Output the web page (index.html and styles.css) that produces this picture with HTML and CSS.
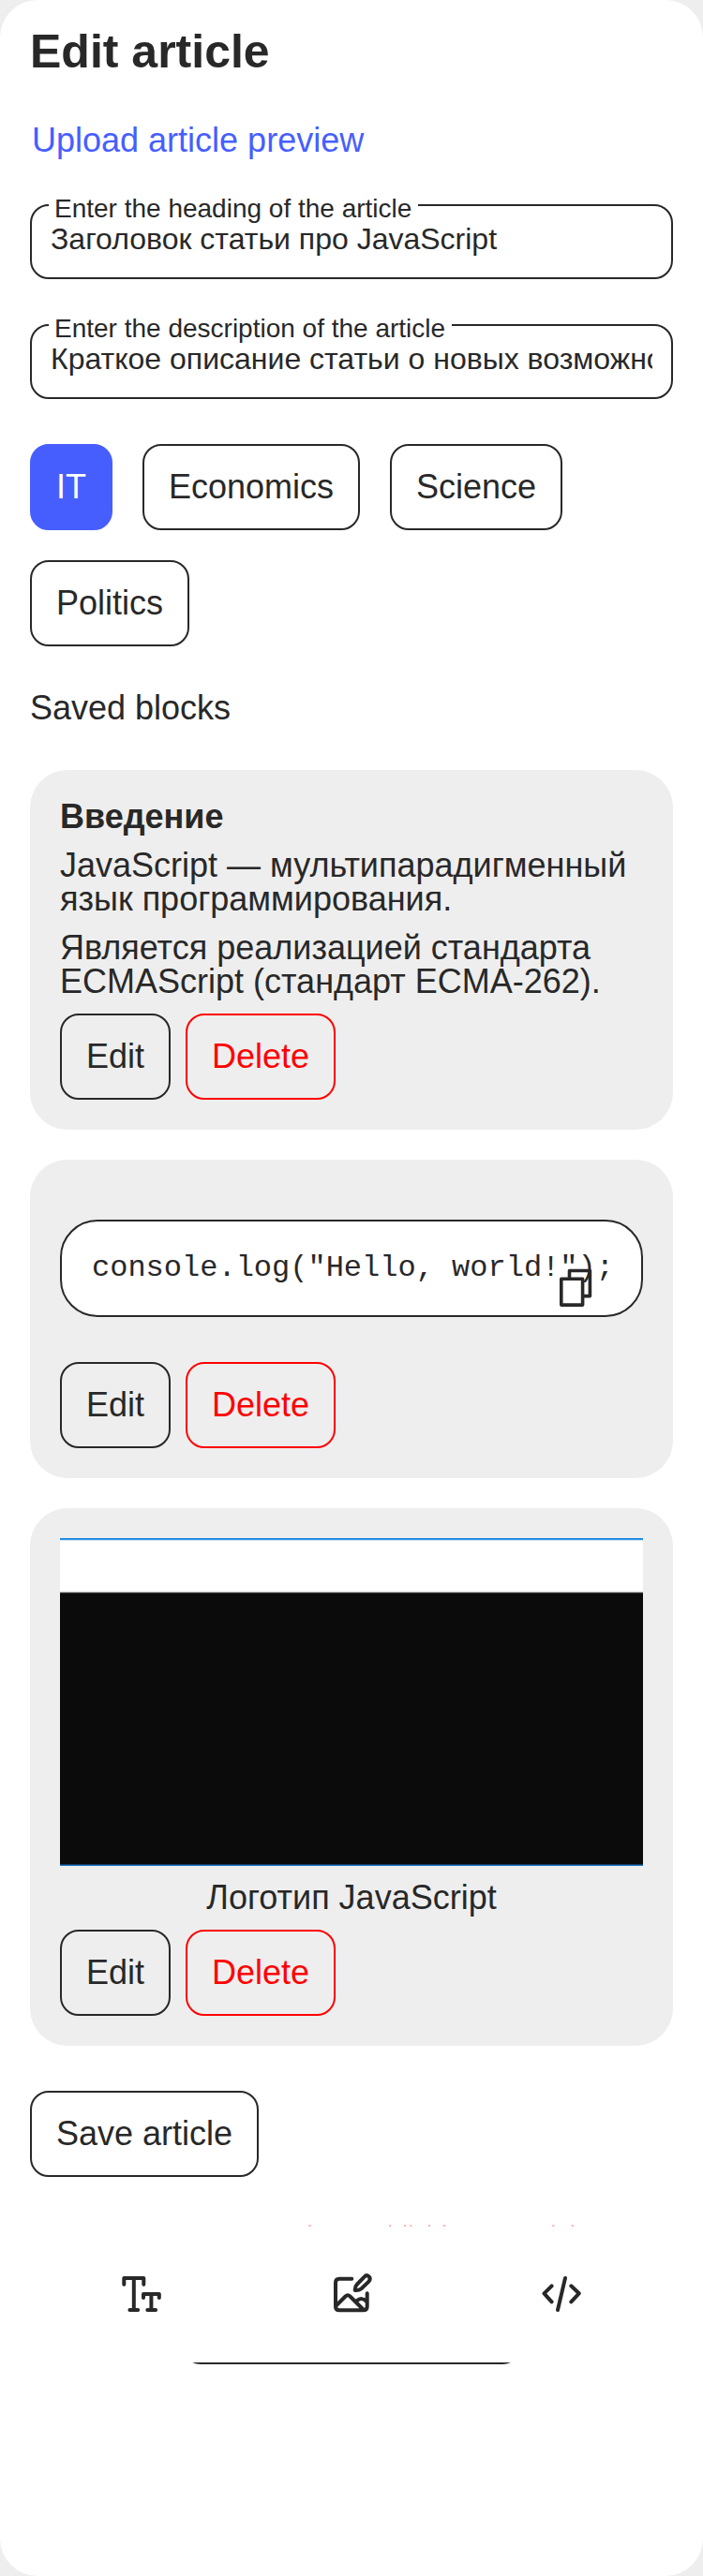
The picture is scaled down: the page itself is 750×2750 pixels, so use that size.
FILE: index.html
```html
<!DOCTYPE html>
<html lang="en">
<head>
<meta charset="utf-8">
<title>Edit article</title>
<link rel="stylesheet" href="styles.css">
</head>
<body>
<main class="page">
  <h1 class="title">Edit article</h1>
  <a class="upload">Upload article preview</a>
  <div class="field">
    <span class="field-label">Enter the heading of the article</span>
    <div class="field-value">Заголовок статьи про JavaScript</div>
  </div>
  <div class="field">
    <span class="field-label">Enter the description of the article</span>
    <div class="field-value">Краткое описание статьи о новых возможностях</div>
  </div>
  <div class="tags">
    <button class="btn active">IT</button>
    <button class="btn">Economics</button>
    <button class="btn">Science</button>
    <button class="btn">Politics</button>
  </div>
  <h2 class="subtitle">Saved blocks</h2>
  <div class="cards">
    <section class="card">
      <h3 class="card-title">Введение</h3>
      <p class="text">JavaScript — мультипарадигменный язык программирования.</p>
      <p class="text">Является реализацией стандарта ECMAScript (стандарт ECMA-262).</p>
      <div class="actions"><button class="btn">Edit</button><button class="btn danger">Delete</button></div>
    </section>
    <section class="card">
      <div class="code">
        <code>console.log("Hello, world!");</code>
        <svg class="copy" width="36" height="42" viewBox="0 0 36 42" fill="none" stroke="#282828" stroke-width="3.6" stroke-linejoin="round"><path d="M10.500 11V2.500H32.400V29.600H24"/><rect x="1.800" y="11.300" width="22.800" height="27.800" fill="#fff"/></svg>
      </div>
      <div class="actions"><button class="btn">Edit</button><button class="btn danger">Delete</button></div>
    </section>
    <section class="card">
      <figure class="figure">
        <div class="picture"></div>
        <figcaption class="text caption">Логотип JavaScript</figcaption>
      </figure>
      <div class="actions"><button class="btn">Edit</button><button class="btn danger">Delete</button></div>
    </section>
  </div>
  <button class="btn save">Save article</button>
  <svg class="specks" width="686" height="2" viewBox="32 0 686 2" fill="#ffb3b3"><path d="M329.300 0h2.400v2h-2.400zM415 0h2v2h-2zM431 0h2v2h-2zM437.300 0h2v2h-2zM457 0h2v2h-2zM472.800 0h2.200v2h-2.200zM589.200 0h2.200v2h-2.200zM609.600 0h2.200v2h-2.200z"/></svg>
  <nav class="toolbar">
    <svg class="icon" width="44" height="44" viewBox="0 0 44 44"><path d="M4.300 13.800V7H25.300V13.800M14.800 7V41M10.400 41H19.200M25 28V24H41.800V28M33.400 24V41M29.300 41H38.100"/></svg>
    <svg class="icon" width="44" height="44" viewBox="0 0 44 44"><path d="M22.300 7.700H9Q5 7.700 5 11.700V37.300Q5 41.300 9 41.300H34.700Q38.700 41.300 38.700 37.300V23.300M5.500 36.500L15.500 26.500Q18 24 20.500 26.500L35 41M27.500 31.500Q32.500 26.500 38 32M25.700 20Q25.500 16 28 13.500L35.500 5.800Q38 3 40.500 5.200Q43 8 40.200 10.800L32.500 18.200Q30 20.300 25.700 20Z"/></svg>
    <svg class="icon" width="44" height="44" viewBox="0 0 44 44"><path d="M10.600 15.300L2.500 23.300L10.600 32.300M31.300 15.300L39.700 23.300L31.300 32.300M25 7L17 41"/></svg>
  </nav>
  <div class="sheet"><div class="sheet-edge"></div></div>
</main>
</body>
</html>
```
FILE: styles.css
```css
* { box-sizing: border-box; margin: 0; padding: 0; }
body { background: #eee; color: #282828; font: 36px/36px "Liberation Sans", Arial, sans-serif; }
.page { height: 2750px; padding: 30px 32px 0; background: #fff; border-radius: 40px; display: flex; flex-direction: column; align-items: flex-start; overflow: hidden; }
.title { font-size: 50px; line-height: 50px; }
.upload { margin: 52px 0 0 2px; color: #475eff; }
.field { position: relative; width: 686px; height: 80px; margin-top: 50px; border: 2px solid #282828; border-radius: 20px; padding: 16px 20px 0; }
.field + .field { margin-top: 48px; }
.field-label { position: absolute; left: 18px; top: -13px; padding: 0 7px 0 6px; background: #fff; font-size: 28px; line-height: 32px; }
.field-value { overflow: hidden; white-space: nowrap; font-size: 32px; line-height: 38px; }
.tags { display: flex; flex-wrap: wrap; gap: 32px; margin-top: 48px; width: 686px; }
.btn { height: 92px; padding: 0 26px; border: 2px solid #282828; border-radius: 20px; background: none; color: inherit; font: inherit; }
.btn.active { background: #475eff; border-color: #475eff; color: #fff; }
.btn.danger { border-color: #f00; color: #f00; }
.subtitle { margin-top: 48px; font-size: 36px; font-weight: 400; }
.cards { display: flex; flex-direction: column; gap: 32px; width: 686px; margin-top: 48px; }
.card { display: flex; flex-direction: column; gap: 16px; padding: 32px; background: #eee; border-radius: 40px; }
.card-title { font-size: 36px; }
.actions { display: flex; gap: 16px; }
.code { position: relative; margin: 32px 0; padding: 32px; height: 104px; border: 2px solid #282828; border-radius: 40px; background: #fff; white-space: nowrap; }
.code code { display: block; font: 32px/36px "Liberation Mono", monospace; }
.copy { position: absolute; left: 531px; top: 50px; }
.figure { display: flex; flex-direction: column; gap: 16px; }
.picture { height: 350px; background: linear-gradient(#1684e0 0 1px, #3a97e4 1px 2px, #cfe5f8 2px 3px, #fff 3px 57px, #c8c8c8 57px 58px, #444 58px 59px, #0b0b0b 59px 348px, #123f69 348px 349px, #2779c4 349px); }
.caption { text-align: center; }
.save { margin-top: 48px; }
.specks { margin-top: 51px; flex: none; }
.toolbar { width: 686px; height: 145px; padding: 48px 96px 0; display: flex; justify-content: space-between; }
.icon { fill: none; stroke: #282828; stroke-width: 4; stroke-linecap: round; stroke-linejoin: round; }
.sheet { width: 362px; height: 2px; margin: 0 auto; overflow: hidden; display: flex; align-items: flex-end; }
.sheet-edge { flex: none; width: 362px; height: 92px; border: 2px solid #282828; border-radius: 20px; }
```
